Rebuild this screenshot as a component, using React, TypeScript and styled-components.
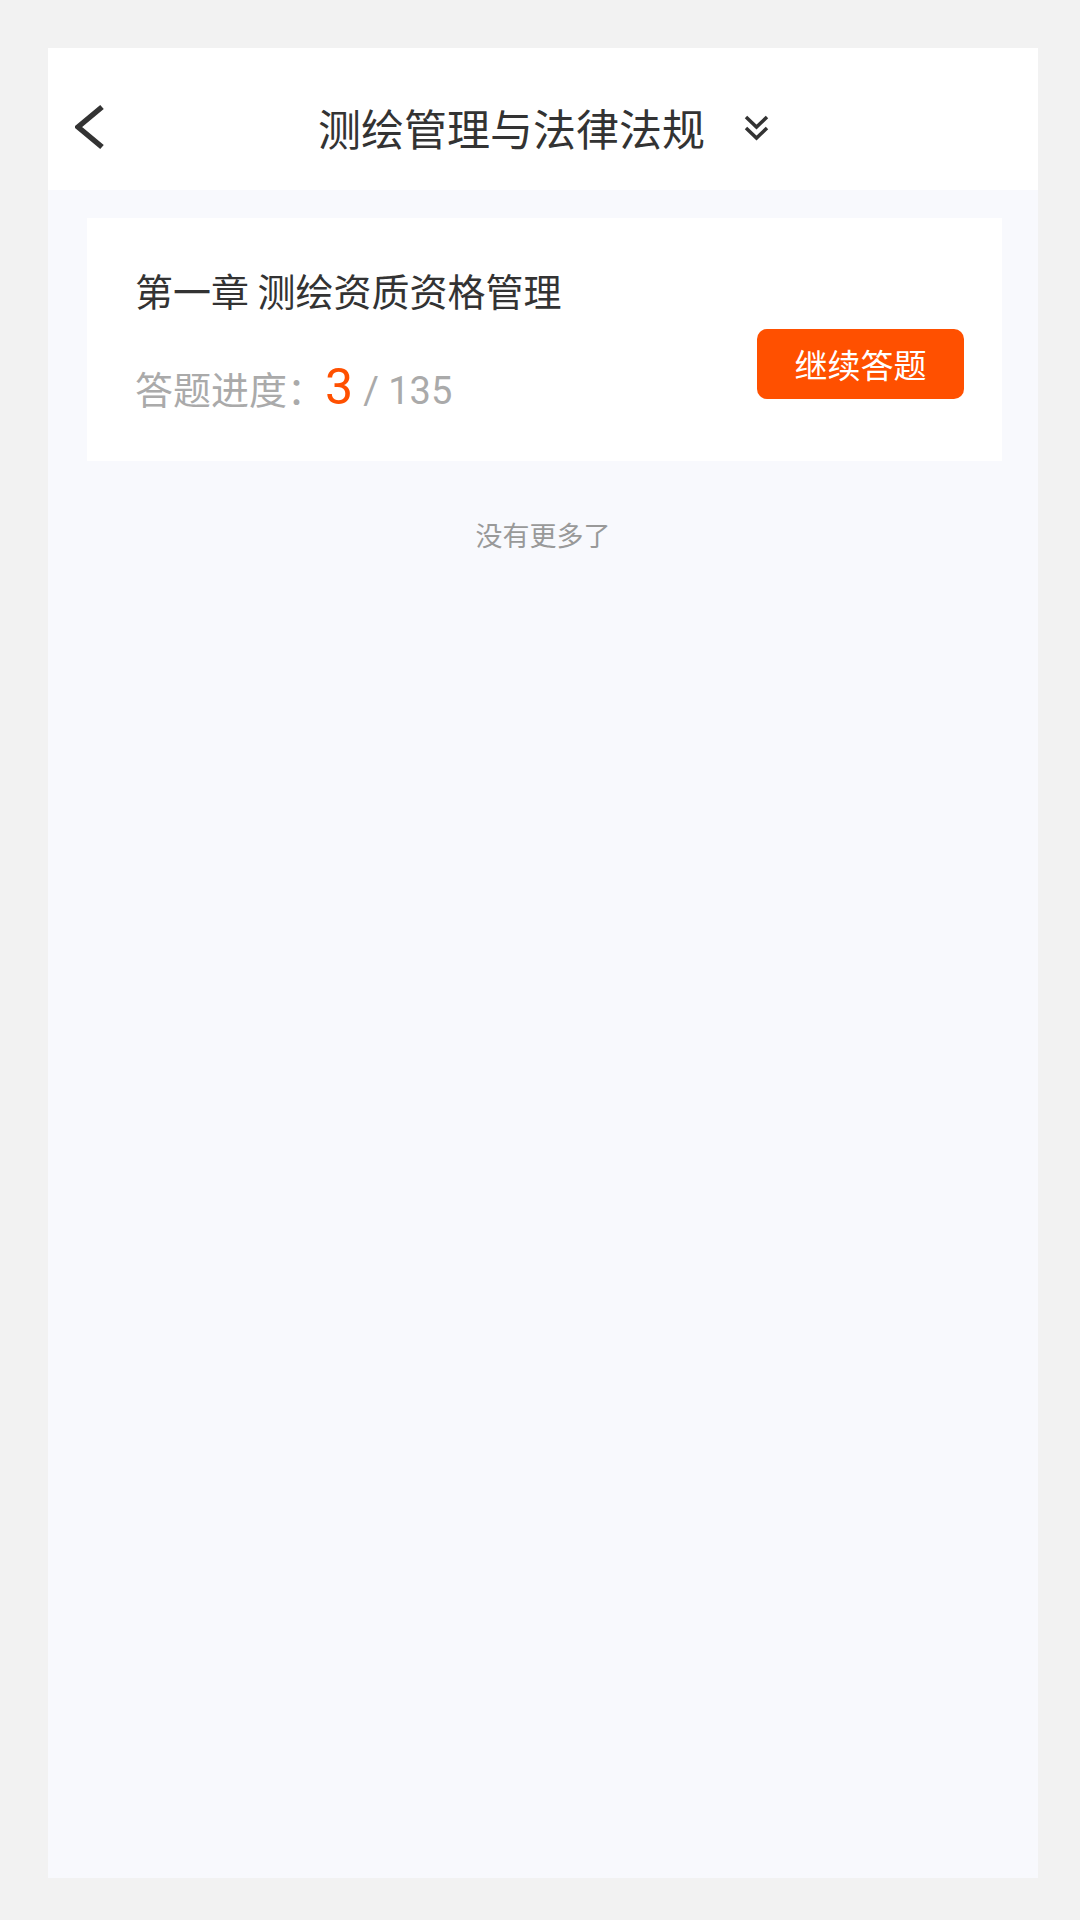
import React from "react";
import styled, { createGlobalStyle } from "styled-components";

const GlobalStyle = createGlobalStyle`
  html, body {
    margin: 0;
    padding: 0;
    background: #f2f2f2;
  }
  body {
    font-family: "Noto Sans CJK SC", "Noto Sans", sans-serif;
  }
`;

const Page = styled.div`
  width: 1080px;
  height: 1920px;
  padding: 48px 42px 42px 48px;
  box-sizing: border-box;
`;

const Screen = styled.div`
  width: 990px;
  height: 1830px;
  background: #f8f9fd;
  display: flex;
  flex-direction: column;
`;

const Header = styled.header`
  height: 142px;
  box-sizing: border-box;
  padding-top: 16px;
  background: #fff;
  display: grid;
  grid-template-columns: 1fr auto 1fr;
  align-items: center;
`;

const BackBtn = styled.button`
  justify-self: start;
  margin-left: 27px;
  padding: 0;
  border: 0;
  background: none;
  display: flex;
  color: #333;
`;

const TitleGroup = styled.div`
  display: flex;
  align-items: center;
  gap: 38px;
  margin-left: 2px;
`;

const Title = styled.h1`
  margin: 0;
  font-size: 43px;
  font-weight: 400;
  color: #333;
  line-height: 60px;
`;

const List = styled.div`
  padding: 28px 36px 0 39px;
`;

const Card = styled.div`
  height: 243px;
  background: #fff;
  box-sizing: border-box;
  padding: 0 38px 0 48px;
  display: flex;
  justify-content: space-between;
`;

const Info = styled.div`
  display: flex;
  flex-direction: column;
`;

const ChapterName = styled.div`
  margin-top: 45px;
  font-size: 38px;
  line-height: 54px;
  color: #333;
`;

const Progress = styled.div`
  margin-top: 40px;
  display: flex;
  align-items: baseline;
  font-size: 38px;
  color: #aaa;
`;

const Num = styled.span<{ $big?: boolean }>`
  font-family: Roboto, "Noto Sans", sans-serif;
  font-size: ${(p) => (p.$big ? "50px" : "38px")};
  color: ${(p) => (p.$big ? "#ff5000" : "#aaa")};
  line-height: ${(p) => (p.$big ? "60px" : "inherit")};
  margin-left: ${(p) => (p.$big ? "0" : "10px")};
`;

const ContinueBtn = styled.button`
  margin-top: 111px;
  width: 207px;
  height: 70px;
  border: 0;
  border-radius: 10px;
  background: #ff5000;
  color: #fff;
  font-family: inherit;
  font-size: 33px;
  padding: 0;
`;

const NoMore = styled.div`
  margin-top: 54px;
  text-align: center;
  font-size: 27px;
  line-height: 40px;
  color: #999;
`;

export default function App() {
  return (
    <>
      <GlobalStyle />
      <Page>
        <Screen>
          <Header>
            <BackBtn aria-label="返回">
              <svg width="32" height="50" viewBox="0 0 32 50" fill="none">
                <polyline
                  points="27,5 3,25 27,45"
                  stroke="currentColor"
                  strokeWidth="5.5"
                  strokeLinejoin="miter"
                />
              </svg>
            </BackBtn>
            <TitleGroup>
              <Title>测绘管理与法律法规</Title>
              <svg width="27" height="27" viewBox="0 0 27 27" fill="none">
                <polyline points="3,3 13.5,13 24,3" stroke="#333" strokeWidth="3.5" />
                <polyline points="3,14 13.5,24 24,14" stroke="#333" strokeWidth="3.5" />
              </svg>
            </TitleGroup>
            <div />
          </Header>
          <List>
            <Card>
              <Info>
                <ChapterName>第一章 测绘资质资格管理</ChapterName>
                <Progress>
                  答题进度：<Num $big>3</Num>
                  <Num>/ 135</Num>
                </Progress>
              </Info>
              <ContinueBtn>继续答题</ContinueBtn>
            </Card>
          </List>
          <NoMore>没有更多了</NoMore>
        </Screen>
      </Page>
    </>
  );
}
